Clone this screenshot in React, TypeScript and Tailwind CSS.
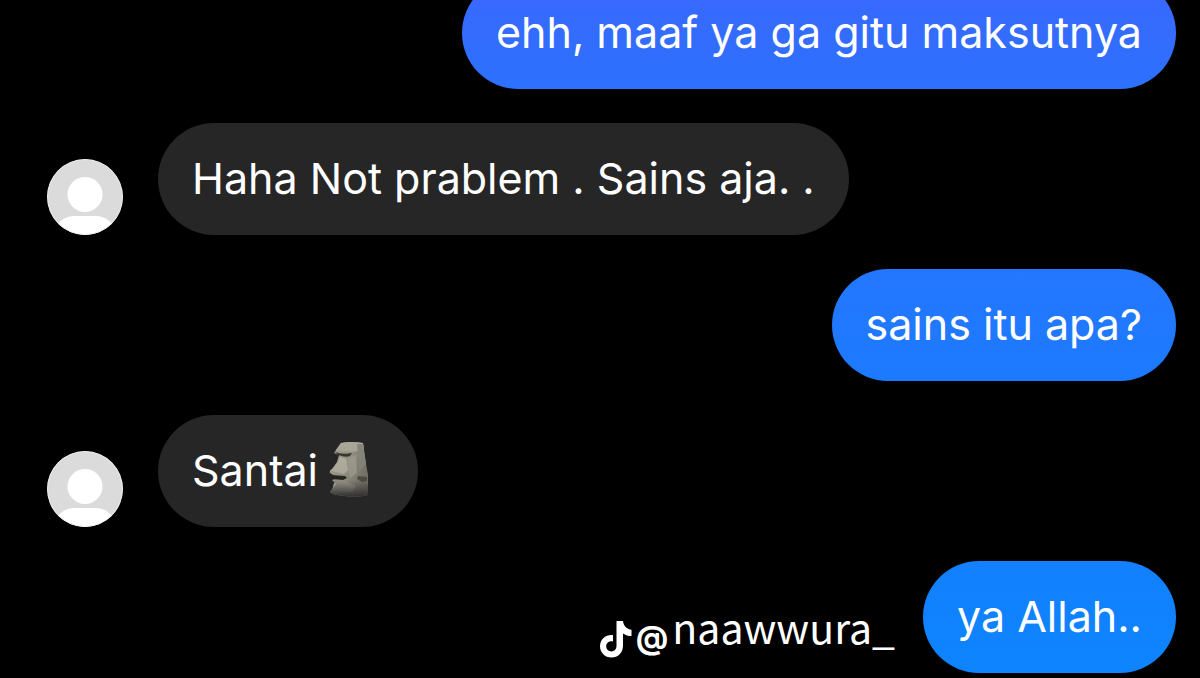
import React from 'react';
import { clsx } from 'clsx';

interface Message {
    id: number;
    text: string;
    mine?: boolean;
    color: string;
    moai?: boolean;
    watermark?: boolean;
}

const messages: Message[] = [
    { id: 1, text: 'ehh, maaf ya ga gitu maksutnya', mine: true, color: 'bg-linear-to-b from-[#3a67fe] to-[#2c71fd]' },
    { id: 2, text: 'Haha Not prablem . Sains aja. .', color: 'bg-[#262626]' },
    { id: 3, text: 'sains itu apa?', mine: true, color: 'bg-linear-to-b from-[#2377fe] to-[#1c7afe]' },
    { id: 4, text: 'Santai', color: 'bg-[#262626]', moai: true },
    { id: 5, text: 'ya Allah..', mine: true, color: 'bg-linear-to-b from-[#1380fe] to-[#0d84fe]', watermark: true },
];

const Avatar: React.FC = () => (
    <svg viewBox="0 0 76 76" className="size-[76px] shrink-0" role="img" aria-label="Avatar">
        <defs>
            <clipPath id="avatar-clip">
                <circle cx="38" cy="38" r="38" />
            </clipPath>
        </defs>
        <g clipPath="url(#avatar-clip)">
            <rect width="76" height="76" fill="#dbdbdb" />
            <circle cx="38" cy="35.5" r="17.5" fill="#fff" />
            <path d="M10 76V66Q17 57 27 57H49Q59 57 66 66V76Z" fill="#fff" />
            <circle cx="38" cy="38" r="37.5" fill="none" stroke="#ececec" strokeWidth="1" />
        </g>
    </svg>
);

const Moai: React.FC = () => (
    <svg viewBox="0 0 56 56" className="size-14" role="img" aria-label="Moai">
        <defs>
            <linearGradient id="moai-face" x1="0" y1="0" x2="1" y2="0.25">
                <stop offset="0" stopColor="#a9a696" />
                <stop offset="0.5" stopColor="#99968a" />
                <stop offset="1" stopColor="#7a786c" />
            </linearGradient>
            <linearGradient id="moai-shade" x1="0" y1="0" x2="0" y2="1">
                <stop offset="0" stopColor="#262626" stopOpacity="0" />
                <stop offset="0.7" stopColor="#262626" stopOpacity="0.1" />
                <stop offset="1" stopColor="#262626" stopOpacity="0.9" />
            </linearGradient>
        </defs>
        <path
            d="M13 1Q23-1 35 1L38 22L40 33V53Q28 57 5 52L2 50L8 42L4 38L10 36L2 31Q1 28 4 27L9 20L11 13L6 11Z"
            fill="url(#moai-face)"
        />
        <path d="M13 1Q23-1 35 1L36 8L24 10L8 8Z" fill="#a9a798" />
        <path d="M7 10Q15 13 24 11L22 14Q18 16 10 13Z" fill="#3a382f" />
        <path d="M12 15L18 17L20 28L16 32L3 29L10 20Z" fill="#b6b2a2" />
        <path d="M20 17L28 13L29 31L22 36L20 27Z" fill="#a09d8f" />
        <path d="M3 33L17 34L19 36L15 38L4 37Z" fill="#25241f" />
        <path d="M6 41L17 39L28 44L24 50L4 49Z" fill="#a3a094" />
        <path d="M30 34L39 35V39L34 40L29 37Z" fill="#514f46" />
        <path d="M29 2L35 2L38 22L31 30Z" fill="#89877b" />
        <path
            d="M13 1Q23-1 35 1L38 22L40 33V53Q28 57 5 52L2 50L8 42L4 38L10 36L2 31Q1 28 4 27L9 20L11 13L6 11Z"
            fill="url(#moai-shade)"
        />
    </svg>
);

const Watermark: React.FC = () => (
    <div className="mr-7 flex items-end gap-1 pb-[15px] text-white">
        <svg viewBox="0 0 32 37" className="h-[37px] w-8" fill="currentColor" role="img" aria-label="TikTok">
            <path d="M16.5 0H23C23.4 4.8 26.8 8.2 31.5 8.8V15C28.3 15 25.3 14 23 12.4V24.5C23 31.8 18 36.5 11.5 36.5C5 36.5 0 31.5 0 25.2C0 18.2 5.8 13.2 13 14V20.4C9.2 19.4 6.2 21.8 6.2 25.2C6.2 28.2 8.5 30.4 11.4 30.4C14.5 30.4 16.5 28.2 16.5 24.8Z" />
        </svg>
        <span className="font-['Inter',sans-serif] text-[32px] leading-10 font-bold">@</span>
        <span className="pb-2 font-['Noto_Sans_CJK_SC',sans-serif] text-[41px] leading-12">naawwura_</span>
    </div>
);

const MessageRow: React.FC<{ message: Message }> = ({ message }) => (
    <li className={clsx('flex items-end', message.mine ? 'justify-end' : 'gap-[35px]')}>
        {!message.mine && <Avatar />}
        {message.watermark && <Watermark />}
        <div
            className={clsx(
                'flex items-center gap-2.5 rounded-[56px] px-[34px] pt-[27px] pb-[29px] text-[43px] leading-14 text-white',
                message.color
            )}
        >
            <p className="whitespace-nowrap">{message.text}</p>
            {message.moai && <Moai />}
        </div>
    </li>
);

export default function App() {
    return (
        <main className="flex h-screen flex-col justify-end overflow-hidden bg-black pr-6 pb-[5px] pl-[47px] font-['Inter',sans-serif]">
            <ul className="flex flex-col gap-[34px]">
                {messages.map((message) => (
                    <MessageRow key={message.id} message={message} />
                ))}
            </ul>
        </main>
    );
}
